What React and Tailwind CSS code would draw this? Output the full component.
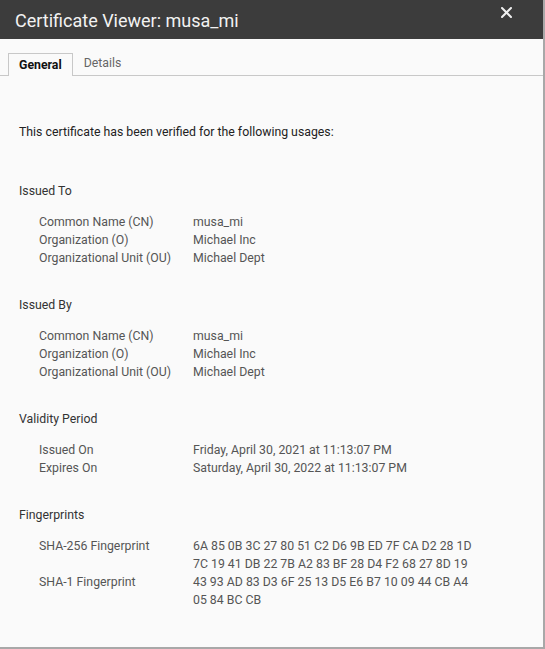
const sections = [
  {
    title: 'Issued To',
    rows: [
      ['Common Name (CN)', ['musa_mi']],
      ['Organization (O)', ['Michael Inc']],
      ['Organizational Unit (OU)', ['Michael Dept']],
    ],
  },
  {
    title: 'Issued By',
    rows: [
      ['Common Name (CN)', ['musa_mi']],
      ['Organization (O)', ['Michael Inc']],
      ['Organizational Unit (OU)', ['Michael Dept']],
    ],
  },
  {
    title: 'Validity Period',
    rows: [
      ['Issued On', ['Friday, April 30, 2021 at 11:13:07 PM']],
      ['Expires On', ['Saturday, April 30, 2022 at 11:13:07 PM']],
    ],
  },
  {
    title: 'Fingerprints',
    rows: [
      ['SHA-256 Fingerprint', ['6A 85 0B 3C 27 80 51 C2 D6 9B ED 7F CA D2 28 1D', '7C 19 41 DB 22 7B A2 83 BF 28 D4 F2 68 27 8D 19']],
      ['SHA-1 Fingerprint', ['43 93 AD 83 D3 6F 25 13 D5 E6 B7 10 09 44 CB A4', '05 84 BC CB']],
    ],
  },
]

function Section({ title, rows, first }) {
  return (
    <div className={first ? 'mt-[41px]' : 'mt-[29px]'}>
      <div className="text-[#333333] leading-[18px]">{title}</div>
      <div className="mt-[13px] pl-5">
        {rows.map(([label, lines], i) => (
          <div key={i} className="flex leading-[18px] text-[#555555]">
            <div className="w-[154px] shrink-0">{label}</div>
            <div>
              {lines.map((l, j) => (
                <div key={j}>{l}</div>
              ))}
            </div>
          </div>
        ))}
      </div>
    </div>
  )
}

export default function App() {
  return (
    <div className="w-[545px] h-[649px] bg-[#fafafa] flex flex-col border-r-2 border-b-2 border-[#a8a8a8] overflow-hidden" style={{ fontFamily: 'Roboto, "Noto Sans", sans-serif' }}>
      <div className="h-[39px] bg-[#3c3c3c] shrink-0 relative">
        <div className="absolute left-[15px] top-[9px] text-[18px] leading-[24px] text-[#f2f2f2]">Certificate Viewer: musa_mi</div>
        <svg className="absolute left-[501px] top-[7px]" width="11" height="11" viewBox="0 0 11 11">
          <path d="M1 1 L10 10 M10 1 L1 10" stroke="#f0f0f0" strokeWidth="2" strokeLinecap="round" />
        </svg>
      </div>
      <div className="mt-[14px] flex items-end border-b border-[#c8c8c8] h-[23px] pl-[8px] text-[12.3px]">
        <div className="h-[23px] -mb-px px-[10px] flex items-center border border-b-0 border-[#c8c8c8] bg-[#fafafa] font-bold text-[#111111]">General</div>
        <div className="h-[23px] px-[11px] flex items-center text-[#666666]">Details</div>
      </div>
      <div className="px-[19px] text-[12.3px]">
        <div className="mt-[47px] text-[#222222] leading-[18px]">This certificate has been verified for the following usages:</div>
        {sections.map((s, i) => (
          <Section key={i} first={i === 0} {...s} />
        ))}
      </div>
    </div>
  )
}
